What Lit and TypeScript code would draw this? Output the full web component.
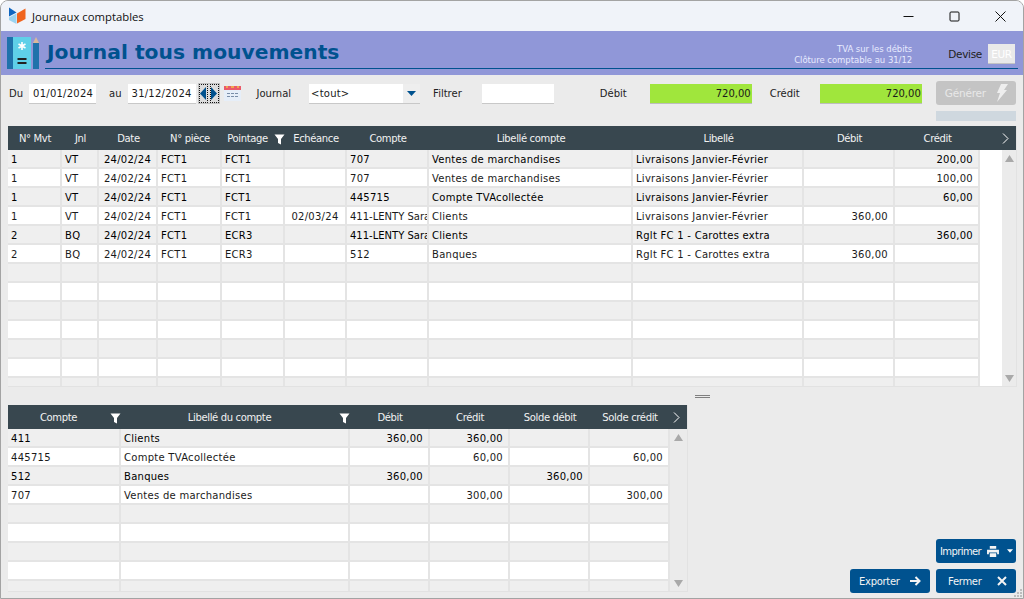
import { LitElement, html, css } from "lit";
import { customElement } from "lit/decorators.js";

const funnel = html`<svg class="funnel" width="11" height="11" viewBox="0 0 11 11"><path d="M0.5 0.5H10.5L7 5V10.5L4 9V5Z" fill="#fff"/></svg>`;

const mainCols = [
  { t: "N° Mvt", w: 54, a: "l" }, { t: "Jnl", w: 37, a: "l" }, { t: "Date", w: 59, a: "c" },
  { t: "N° pièce", w: 64, a: "l" }, { t: "Pointage", w: 63, a: "l" }, { t: "Echéance", w: 62, a: "c" },
  { t: "Compte", w: 82, a: "l" }, { t: "Libellé compte", w: 204, a: "l" }, { t: "Libellé", w: 171, a: "l" },
  { t: "Débit", w: 91, a: "r" }, { t: "Crédit", w: 85, a: "r" },
];
const mainRows = [
  ["1","VT","24/02/24","FCT1","FCT1","","707","Ventes de marchandises","Livraisons Janvier-Février","","200,00"],
  ["1","VT","24/02/24","FCT1","FCT1","","707","Ventes de marchandises","Livraisons Janvier-Février","","100,00"],
  ["1","VT","24/02/24","FCT1","FCT1","","445715","Compte TVAcollectée","Livraisons Janvier-Février","","60,00"],
  ["1","VT","24/02/24","FCT1","FCT1","02/03/24","411-LENTY Sara","Clients","Livraisons Janvier-Février","360,00",""],
  ["2","BQ","24/02/24","FCT1","ECR3","","411-LENTY Sara","Clients","Rglt FC 1 - Carottes extra","","360,00"],
  ["2","BQ","24/02/24","FCT1","ECR3","","512","Banques","Rglt FC 1 - Carottes extra","360,00",""],
];
const subCols = [
  { t: "Compte", w: 113, a: "l" }, { t: "Libellé du compte", w: 229, a: "l" }, { t: "Débit", w: 80, a: "r" },
  { t: "Crédit", w: 80, a: "r" }, { t: "Solde débit", w: 80, a: "r" }, { t: "Solde crédit", w: 80, a: "r" },
];
const subRows = [
  ["411","Clients","360,00","360,00","",""],
  ["445715","Compte TVAcollectée","","60,00","","60,00"],
  ["512","Banques","360,00","","360,00",""],
  ["707","Ventes de marchandises","","300,00","","300,00"],
];

const arrowUp = html`<svg width="9" height="7" viewBox="0 0 9 7"><path d="M4.5 0L9 7H0Z" fill="#a9a9a9"/></svg>`;
const arrowDown = html`<svg width="9" height="7" viewBox="0 0 9 7"><path d="M4.5 7L9 0H0Z" fill="#a9a9a9"/></svg>`;

@customElement("app-root")
export class AppRoot extends LitElement {
  static styles = css`
    :host { display: block; width: 1024px; height: 599px; overflow: hidden; background: #fff; font-family: "DejaVu Sans", sans-serif; font-size: 10px; color: #1a1a1a; }
    * { box-sizing: border-box; }
    .win { width: 1024px; height: 599px; border: 1px solid #a3a3a3; border-radius: 8px 8px 0 0; background: #ebebeb; display: flex; flex-direction: column; overflow: hidden; position: relative; }
    .title { height: 30px; flex: none; background: #f0f3f9; display: flex; align-items: center; padding-left: 7px; color: #111; font-family: "Open Sans", sans-serif; }
    .title .name { margin-left: 5px; font-size: 11.3px; }
    .ctrls { margin-left: auto; display: flex; }
    .ctrls div { width: 46px; height: 30px; display: flex; align-items: center; justify-content: center; }
    .banner { height: 44px; flex: none; background: #9097d8; padding: 4px 5px 6px 6px; display: flex; align-items: flex-start; }
    .logo { flex: none; margin-top: 2px; }
    .bannermain { flex: 1; margin-left: 5px; border-bottom: 1px solid #00528f; display: flex; align-items: center; height: 34px; }
    .h1 { font-weight: bold; font-size: 20.25px; color: #00528f; margin: 1px 0 0 2px; line-height: 30px; }
    .tva { margin-left: auto; margin-right: 36px; text-align: right; font-size: 8.5px; color: #e8ebff; line-height: 11px; margin-top: 6px; letter-spacing: -0.04px; }
    .devise { display: flex; align-items: center; font-size: 10.5px; color: #222; margin: 5px 3px 0 0; letter-spacing: -0.3px; }
    .devise b { font-weight: normal; width: 27px; height: 20px; margin-left: 6px; background: #e9e9e9; color: #fff; display: flex; align-items: center; justify-content: center; border-bottom: 1px solid #c4c4c4; }
    .tools { height: 51px; flex: none; display: flex; align-items: flex-start; padding: 9px 7px 0 8px; }
    .tools > * { flex: none; }
    .lbl { color: #222; line-height: 20px; }
    .in { height: 20px; background: #fff; border-bottom: 1px solid #c8c8c8; line-height: 19px; }
    .date { margin-left: 6px; padding-left: 4px; letter-spacing: 0.25px; }
    .d1 { width: 67px; }
    .d2 { width: 68px; }
    .stepper { margin: -1px 0 0 2px; width: 22px; height: 21px; border: 1px solid #c0c0c0; display: flex; background: #dcdcdc; gap: 2px; }
    .stepper span { flex: 1; border: 1px dotted #111; display: flex; align-items: center; justify-content: center; }
    .gen { width: 80px; height: 24px; background: #c4c4c4; border-radius: 3px; color: #e8e8e8; display: flex; align-items: center; padding-left: 9px; font-size: 10.5px; justify-content: space-between; padding-right: 8px; letter-spacing: -0.2px; }
    .bar { width: 80px; height: 10px; background: #cfd8df; margin-top: 6px; }
    .grn { background: #a0e63c; border-bottom: 1px solid #bdbdbd; text-align: right; padding-right: 1px; }
    .sel { width: 111px; display: flex; justify-content: space-between; padding-left: 2px; background: linear-gradient(to right, #fff 94px, #eee 94px); letter-spacing: 0.2px; }
    .sel svg { margin: 7px 4px 0 0; }
    .grid { flex: none; margin-left: 7px; display: flex; flex-direction: column; overflow: hidden; border: solid #e2e2e2; border-width: 0 1px 1px 0; }
    .hrow { display: flex; height: 24px; background: #38474f; color: #f2f2f2; align-items: center; flex: none; position: relative; letter-spacing: -0.35px; }
    .hrow > div { text-align: center; white-space: nowrap; position: relative; }
    .hrow > .hasf { padding-right: 12px; }
    .funnel { position: absolute; right: 0; top: 1px; }
    .more { position: absolute; right: 7px; top: 7px; }
    .body { display: flex; flex: 1; min-height: 0; }
    .rows { flex: none; overflow: hidden; letter-spacing: 0.27px; }
    .row { display: flex; height: 19px; background: #fff; border-bottom: 2px solid #e4e4e4; }
    .row.odd { background: #efefef; color: #000; }
    .row > div { border-right: 2px solid #e4e4e4; padding: 1px 0 0 3px; white-space: nowrap; overflow: hidden; line-height: 17px; flex: none; }
    .row > .r { text-align: right; padding-right: 5px; }
    .row > .c { text-align: center; padding-left: 0; }
    .row > .tight { letter-spacing: 0; }
    .scroll { flex: 1; display: flex; flex-direction: column; align-items: center; justify-content: space-between; background: #ebebeb; padding: 5px 0 4px; }
    .sp { width: 22px; background: #fff; flex: none; }
    .main { width: 1009px; height: 261px; }
    .handle { flex: none; height: 18px; display: flex; align-items: center; justify-content: center; padding-left: 380px; }
    .handle i { display: block; width: 15px; height: 3px; border-top: 1px solid #808080; border-bottom: 1px solid #808080; }
    .lower { flex: 1; display: flex; min-height: 0; }
    .sub { width: 680px; height: 187px; margin-left: 7px; }
    .btns { flex: 1; display: flex; flex-direction: column; align-items: flex-end; justify-content: flex-end; padding: 0 7px 5px 0; gap: 6px; }
    .btnrow { display: flex; gap: 6px; }
    .btn { width: 80px; height: 24px; background: #00528f; color: #f4f4f4; border-radius: 3px; display: flex; align-items: center; justify-content: space-between; padding: 0 9px; font-size: 10px; letter-spacing: -0.3px; }
    .btn.print { padding: 0 3px 0 4px; letter-spacing: -0.6px; }
    .btn.print .pr { margin-left: 6px; }
    .btn.print .dd { margin-left: auto; }
    .btn.print { justify-content: flex-start; }
    .btn.close { padding: 0 9px 0 12px; }
    .grip { position: absolute; right: 1px; bottom: 1px; }
  `;

  private grid(cols: typeof mainCols, rows: string[][], n: number, filters: string[], strip: boolean) {
    const tot = cols.reduce((s, c) => s + c.w, 0);
    const arr = Array.from({ length: n }, (_, i) => rows[i] ?? cols.map(() => ""));
    return html`
      <div class="hrow">
        ${cols.map((c) => {
          const f = filters.includes(c.t);
          return html`<div class=${f ? "hasf" : ""} style="width:${c.w}px">${c.t}${f ? funnel : ""}</div>`;
        })}
        <svg class="more" width="7" height="11" viewBox="0 0 7 11"><path d="M1 0.5L6 5.5L1 10.5" fill="none" stroke="#fff"/></svg>
      </div>
      <div class="body">
        <div class="rows" style="width:${tot}px">
          ${arr.map((r, i) => html`<div class="row ${i % 2 ? "" : "odd"}">
            ${r.map((v, j) => html`<div class="${cols[j].a} ${v.startsWith("411-") ? "tight" : ""}" style="width:${cols[j].w}px">${v}</div>`)}
          </div>`)}
        </div>
        ${strip ? html`<div class="sp"></div>` : ""}
        <div class="scroll">${arrowUp}${arrowDown}</div>
      </div>`;
  }

  render() {
    return html`<div class="win">
      <div class="title">
        <svg width="19" height="18" viewBox="0 0 19 18">
          <path d="M1 0.5L8.5 5.5L1 9.5Z" fill="#0f66c0"/>
          <path d="M9 6.5L17.5 1.5V12L9 16.5Z" fill="#f0641e"/>
          <path d="M1 10.5L8.5 6.5V17L1 13Z" fill="#9ad3f0"/>
        </svg>
        <span class="name">Journaux comptables</span>
        <div class="ctrls">
          <div><svg width="11" height="11" viewBox="0 0 11 11"><path d="M0.5 5.5H10.5" stroke="#111"/></svg></div>
          <div><svg width="11" height="11" viewBox="0 0 11 11"><rect x="1" y="1" width="9" height="9" rx="1" fill="none" stroke="#111"/></svg></div>
          <div><svg width="11" height="11" viewBox="0 0 11 11"><path d="M0.5 0.5L10.5 10.5M10.5 0.5L0.5 10.5" stroke="#111"/></svg></div>
        </div>
      </div>
      <div class="banner">
        <svg class="logo" width="33" height="33" viewBox="0 0 33 33">
          <rect width="6" height="32" fill="#1f72ab"/><rect x="6" width="18" height="32" fill="#5fd0e8"/>
          <path d="M15 5V13M11.5 7L18.5 11M18.5 7L11.5 11" stroke="#fff" stroke-width="1.6"/>
          <rect x="10.5" y="21" width="9" height="2" fill="#222"/><rect x="10.5" y="25" width="9" height="2" fill="#222"/>
          <rect x="26" y="6" width="6" height="26" fill="#1f72ab"/><path d="M26 6L29 0L32 6Z" fill="#d9b99b"/>
        </svg>
        <div class="bannermain">
          <span class="h1">Journal tous mouvements</span>
          <div class="tva">TVA sur les débits<br />Clôture comptable au 31/12</div>
          <div class="devise">Devise<b>EUR</b></div>
        </div>
      </div>
      <div class="tools">
        <span class="lbl">Du</span>
        <div class="in date d1">01/01/2024</div>
        <span class="lbl" style="margin-left:13px">au</span>
        <div class="in date d2">31/12/2024</div>
        <div class="stepper">
          <span><svg width="6" height="13" viewBox="0 0 6 13"><path d="M6 0V13L0 6.5Z" fill="#00528f"/></svg></span>
          <span><svg width="6" height="13" viewBox="0 0 6 13"><path d="M0 0V13L6 6.5Z" fill="#00528f"/></svg></span>
        </div>
        <svg style="margin:2px 0 0 4px" width="17" height="15" viewBox="0 0 17 15"><rect y="3" width="17" height="12" fill="#e6eef8"/><rect width="17" height="4" fill="#ea5a6a"/><path d="M2 0h2v2H2zM7 0h3v2H7zM13 0h2v2h-2z" fill="#f0a850"/><path d="M3 7h3v1H3zM7 7h3v1H7zM11 7h3v1h-3zM3 10h3v1H3zM7 10h3v1H7zM11 10h3v1h-3z" fill="#7a8ea8"/></svg>
        <span class="lbl" style="margin-left:16px">Journal</span>
        <div class="in sel" style="margin-left:18px"><span>&lt;tout&gt;</span><svg width="9" height="5" viewBox="0 0 9 5"><path d="M0 0H9L4.5 5Z" fill="#00528f"/></svg></div>
        <span class="lbl" style="margin-left:13px">Filtrer</span>
        <div class="in" style="width:72px;margin-left:20px"></div>
        <span class="lbl" style="margin-left:46px">Débit</span>
        <div class="in grn" style="width:102px;margin-left:23px">720,00</div>
        <span class="lbl" style="margin-left:18px">Crédit</span>
        <div class="in grn" style="width:102px;margin-left:20px">720,00</div>
        <div style="margin-left:14px;margin-top:-3px">
          <div class="gen">Générer<svg width="12" height="18" viewBox="0 0 12 18"><path d="M5 0H12L8 6H11L1 18L4 9H1Z" fill="#eee"/></svg></div>
          <div class="bar"></div>
        </div>
      </div>
      <div class="grid main">${this.grid(mainCols, mainRows, 13, ["Pointage"], true)}</div>
      <div class="handle"><i></i></div>
      <div class="lower">
        <div class="grid sub">${this.grid(subCols, subRows, 9, ["Compte", "Libellé du compte"], false)}</div>
        <div class="btns">
          <div class="btn print"><span>Imprimer</span>
            <svg class="pr" width="12" height="11" viewBox="0 0 13 12"><path d="M3 0H10V3H3ZM0 4H13V9H11V7H2V9H0ZM3 8H10V12H3Z" fill="#f4f4f4"/></svg>
            <svg class="dd" width="6" height="4" viewBox="0 0 7 4"><path d="M0 0H7L3.5 4Z" fill="#fff"/></svg></div>
          <div class="btnrow">
            <div class="btn">Exporter<svg width="11" height="10" viewBox="0 0 11 10"><path d="M0 5H9.5M5.5 1L9.5 5L5.5 9" fill="none" stroke="#f4f4f4" stroke-width="2"/></svg></div>
            <div class="btn close">Fermer<svg width="10" height="10" viewBox="0 0 10 10"><path d="M1 1L9 9M9 1L1 9" stroke="#f4f4f4" stroke-width="2"/></svg></div>
          </div>
        </div>
      </div>
      <svg class="grip" width="8" height="8" viewBox="0 0 8 8"><path d="M6 0h2v2H6zM3 3h2v2H3zM6 3h2v2H6zM0 6h2v2H0zM3 6h2v2H3zM6 6h2v2H6z" fill="#bdbdbd"/></svg>
    </div>`;
  }
}
